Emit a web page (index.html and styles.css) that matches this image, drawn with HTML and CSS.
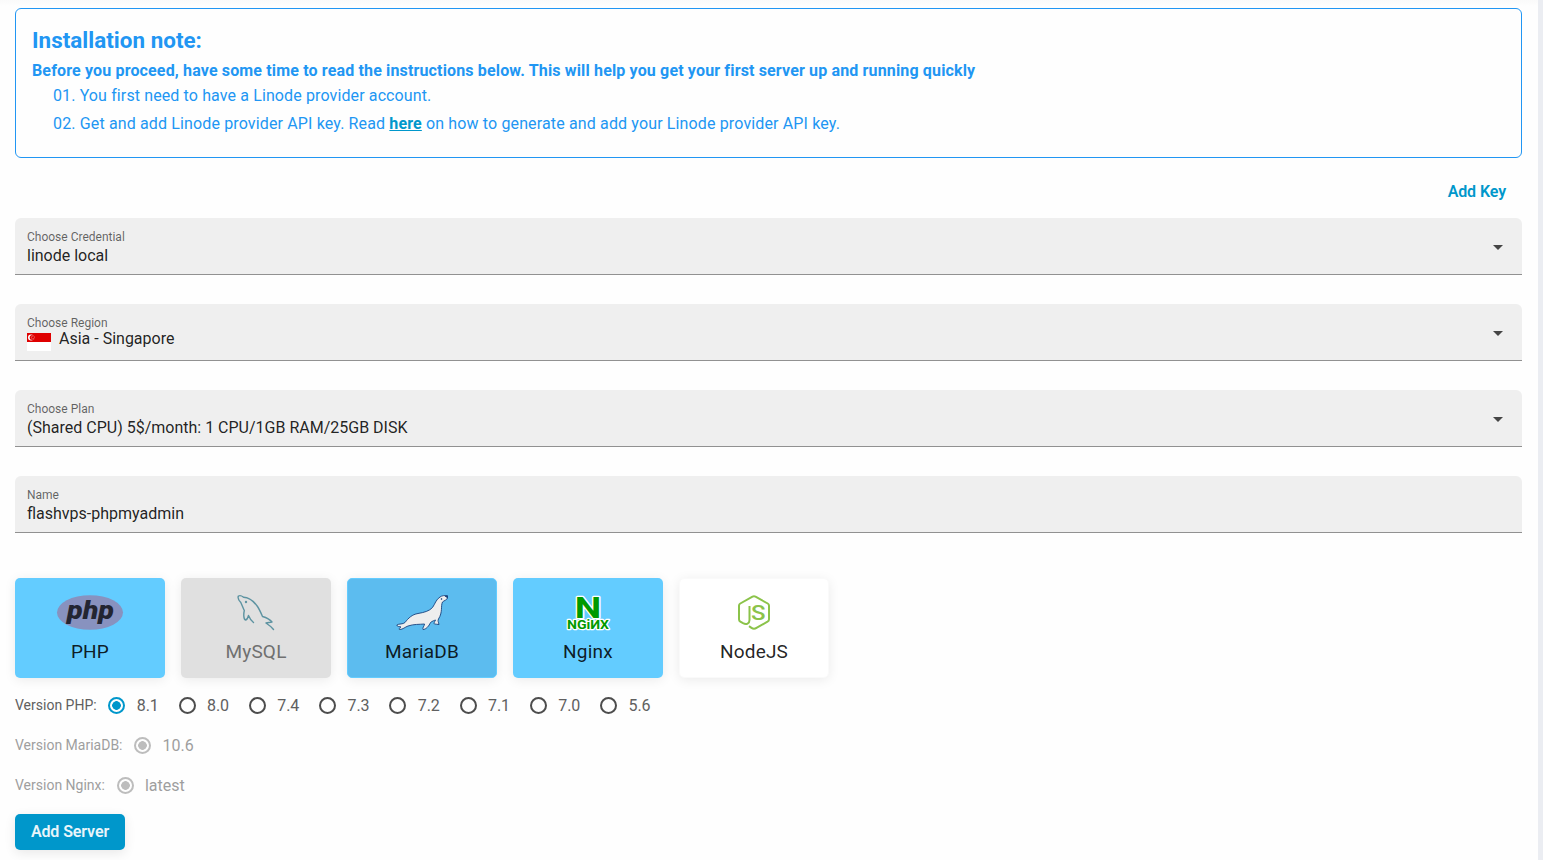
FILE: index.html
```html
<!DOCTYPE html>
<html lang="en">
<head>
<meta charset="utf-8">
<title>Add Server</title>
<link rel="stylesheet" href="styles.css">
</head>
<body>
<main class="panel">
  <section class="note">
    <h2 class="note-title">Installation note:</h2>
    <p class="note-lead">Before you proceed, have some time to read the instructions below. This will help you get your first server up and running quickly</p>
    <p class="note-item">01. You first need to have a Linode provider account.</p>
    <p class="note-item">02. Get and add Linode provider API key. Read <a class="note-link" href="#">here</a> on how to generate and add your Linode provider API key.</p>
  </section>

  <div class="key-row"><button class="add-key">Add Key</button></div>

  <div class="field">
    <div class="field-body"><span class="field-label">Choose Credential</span><span class="field-value">linode local</span></div>
    <span class="arrow"></span>
  </div>
  <div class="field">
    <div class="field-body"><span class="field-label">Choose Region</span><span class="field-value region">
      <svg class="flag" width="24" height="18" viewBox="0 0 24 18"><path fill="#fff" d="M0 0h24v18H0z"/><path fill="#df0000" d="M0 0h24v9H0z"/><circle cx="4" cy="4.6" r="3" fill="#fff"/><circle cx="5.2" cy="4.6" r="2.5" fill="#df0000"/><g fill="#fff" opacity=".7"><circle cx="5.8" cy="2.9" r=".5"/><circle cx="7.3" cy="4" r=".5"/><circle cx="4.4" cy="4" r=".5"/><circle cx="5" cy="5.8" r=".5"/><circle cx="6.8" cy="5.8" r=".5"/></g></svg>Asia - Singapore</span></div>
    <span class="arrow"></span>
  </div>
  <div class="field">
    <div class="field-body"><span class="field-label">Choose Plan</span><span class="field-value">(Shared CPU) 5$/month: 1 CPU/1GB RAM/25GB DISK</span></div>
    <span class="arrow"></span>
  </div>
  <div class="field">
    <div class="field-body"><span class="field-label">Name</span><span class="field-value">flashvps-phpmyadmin</span></div>
  </div>

  <div class="cards">
    <div class="card selected">
      <svg class="logo" width="66" height="35" viewBox="0 0 66 35"><ellipse cx="33" cy="17.5" rx="33" ry="17.3" fill="#8892bf"/><text class="php-text" x="33.500" y="23.500" textLength="47" lengthAdjust="spacingAndGlyphs">php</text></svg>
      <span>PHP</span>
    </div>
    <div class="card disabled">
      <svg class="logo" width="38" height="35" viewBox="0 0 38 35" fill="none" stroke="#5d93a1" stroke-width="1.4" stroke-linejoin="round" stroke-linecap="round"><path d="M16.500 27.500C14 25.500 12.500 23 11.500 20.500C11 22 10.500 25 8.500 25C6.500 24.500 6.500 19 7.300 15.500C6 13 5 10 3.800 7.500C2 5.500 .5 2.500 1.500 1C3 .2 5 1 6.500 2.200C12 2.500 17 6.500 20.500 11.500C22.500 14.500 24 18 25.500 21.500C29 22.500 33 24.500 35 27C33 27.500 31 27.500 29 28C32 30 34.500 32 36.500 34.500"/><circle cx="9" cy="7" r=".5"/></svg>
      <span>MySQL</span>
    </div>
    <div class="card locked">
      <svg class="logo" width="52" height="35" viewBox="0 0 52 35" fill="#eee" stroke="#17427d" stroke-width=".9" stroke-linejoin="round"><path d="M51.500 1C49 .2 46 .5 44 2C40 4.500 39 9 36.500 12.500C33.500 16 28 17.500 22 18.500C16 19.500 12.500 23 9 27.500C7 29.500 3 28.500 .8 30C1 32 4 31.500 5 32C3.500 33 2.500 34.200 3.500 34.500C7 34.500 9 32 12 31C18 29 23 29.500 28.500 29C28.500 31 26 33 27 34.500C30 34.500 33 31 34.500 27.500C36.500 26 38 25.500 39.500 25C38.500 27 37.500 28.500 38.500 29C40 29.500 41.500 29 43 29.500C42.500 27 41.500 26 42.500 24C47 17 44.500 11 46.500 7C48 5.500 51 5 51.500 3Z"/><circle cx="45.500" cy="4" r=".5"/><path d="M49 1l2.500-.2v2z" fill="#17427d"/></svg>
      <span>MariaDB</span>
    </div>
    <div class="card selected">
      <svg class="logo nginx" width="44" height="35" viewBox="0 0 44 35"><text class="nginx-n" x="22" y="23" textLength="26.500" lengthAdjust="spacingAndGlyphs">N</text><text class="nginx-word" x="22" y="33.500" textLength="42" lengthAdjust="spacingAndGlyphs">NGiИX</text></svg>
      <span>Nginx</span>
    </div>
    <div class="card plain">
      <svg class="logo" width="32" height="35" viewBox="0 0 32 35"><path d="M11 31.200L13.500 32.900Q16 34.700 18.500 32.900L29.500 26.700Q31 25.800 31 24.200V10.800Q31 9.300 29.700 8.500L17.500 1.600Q16 .8 14.500 1.600L2.300 8.500Q1 9.300 1 10.800V24.200Q1 25.800 2.300 26.600L5 28.200C8.500 30 11.500 28.500 11.500 25V11" fill="none" stroke="#8bc34a" stroke-width="2"/><text class="node-text" x="20.300" y="24.800" textLength="14.500" lengthAdjust="spacingAndGlyphs">S</text></svg>
      <span>NodeJS</span>
    </div>
  </div>

  <div class="versions">
    <span class="version-label">Version PHP:</span>
    <label class="option"><i class="radio checked"></i>8.1</label>
    <label class="option"><i class="radio"></i>8.0</label>
    <label class="option"><i class="radio"></i>7.4</label>
    <label class="option"><i class="radio"></i>7.3</label>
    <label class="option"><i class="radio"></i>7.2</label>
    <label class="option"><i class="radio"></i>7.1</label>
    <label class="option"><i class="radio"></i>7.0</label>
    <label class="option"><i class="radio"></i>5.6</label>
  </div>
  <div class="versions muted">
    <span class="version-label">Version MariaDB:</span>
    <label class="option"><i class="radio checked"></i>10.6</label>
  </div>
  <div class="versions muted">
    <span class="version-label">Version Nginx:</span>
    <label class="option"><i class="radio checked"></i>latest</label>
  </div>
  <button class="add-server">Add Server</button>
</main>
</body>
</html>
```
FILE: styles.css
```css
* { box-sizing: border-box; }
body { margin: 0; height: 860px; overflow: hidden; background: #ebedf2; font-family: Roboto, sans-serif; color: rgba(0,0,0,.87); }
.panel { width: 1538px; height: 860px; padding: 8px 16px 0 15px; background: linear-gradient(#fafafa, #fefefe 6px); }
.note { height: 150px; border: 1px solid #2196f3; border-radius: 6px; padding: 16px; color: #2196f3; }
.note-title { margin: 0; font-size: 22.4px; line-height: 31px; font-weight: 700; letter-spacing: .03px; }
.note-lead { margin: 0; padding-top: 1px; font-size: 16px; line-height: 28px; font-weight: 700; letter-spacing: .15px; }
.note-item { margin: 0 0 0 21px; font-size: 16px; line-height: 28px; letter-spacing: .14px; }
.note-lead + .note-item { margin-top: -3px; letter-spacing: .12px; }
.note-link { color: #0097cb; font-weight: 700; }
.key-row { height: 60px; display: flex; justify-content: flex-end; padding: 16px 0 8px; }
button { border: 0; font-family: inherit; font-size: 16px; font-weight: 600; letter-spacing: -.1px; }
.add-key { height: 36px; padding: 0 16px 2px; background: none; color: #0097cb; }
.field { height: 57px; margin-bottom: 29px; padding: 12px 16px 0 12px; display: flex; background: #efefef; border-bottom: 1px solid #919191; border-radius: 6px 6px 0 0; }
.field-body { flex: 1; display: flex; flex-direction: column; }
.field-label { font-size: 12px; line-height: 14px; color: rgba(0,0,0,.6); }
.field-value { font-size: 16px; line-height: 24px; }
.region { display: flex; gap: 8px; line-height: 18px; }
.flag { margin-top: 3px; }
.arrow { width: 0; height: 0; margin: 15px 3px 0; border: 5px solid transparent; border-top-color: #454545; border-bottom: 0; }
.cards { display: flex; gap: 16px; margin-top: 45px; }
.card { width: 150px; height: 100px; padding-top: 17px; display: flex; flex-direction: column; align-items: center; gap: 8px; border-radius: 5px; box-shadow: 0 2px 12px rgba(0,0,0,.08); font-size: 19px; line-height: 28px; letter-spacing: .2px; }
.logo { overflow: visible; }
.selected { background: #63ccff; }
.disabled { background: #e0e0e0; color: #707070; }
.locked { background: #5cbcef; border: 1px solid #63ccff; padding-top: 16px; }
.plain { background: #fff; border: 1px solid #fafafa; padding-top: 16px; }
.php-text { font: italic 900 26px Roboto, sans-serif; fill: #232531; text-anchor: middle; letter-spacing: 0; }
.nginx-n { font: 700 29px Roboto, sans-serif; text-anchor: middle; letter-spacing: 0; }
.nginx-word { font: 700 12.5px Roboto, sans-serif; text-anchor: middle; letter-spacing: 0; }
.nginx text { fill: #009a00; stroke: #fff; stroke-width: 2.4px; paint-order: stroke; stroke-linejoin: round; }
.node-text { font: 500 19.5px Roboto, sans-serif; fill: #8bc34a; text-anchor: middle; letter-spacing: 0; }
.versions { height: 40px; display: flex; align-items: center; color: #606060; }
.cards + .versions { margin-top: 7px; }
.version-label { font-size: 14px; margin-right: 11.7px; }
.option { display: flex; align-items: center; font-size: 16px; margin-right: 20px; }
.radio { width: 17px; height: 17px; margin-right: 11.3px; border: 2px solid #4d4d4d; border-radius: 50%; }
.option + .option { margin-left: -.25px; }
.radio.checked { border-color: #0097cb; background: radial-gradient(circle, #0097cb 4px, transparent 4.6px); }
.muted { color: #9e9e9e; }
.muted .radio.checked { border-color: #bdbdbd; background: radial-gradient(circle, #bdbdbd 4px, transparent 4.6px); }
.add-server { width: 110px; height: 36px; margin-top: 9px; display: block; padding: 0 0 2px; border-radius: 5px; background: #0097cb; color: #e9f5fa; box-shadow: 0 3px 12px rgba(0,0,0,.09); }
```
